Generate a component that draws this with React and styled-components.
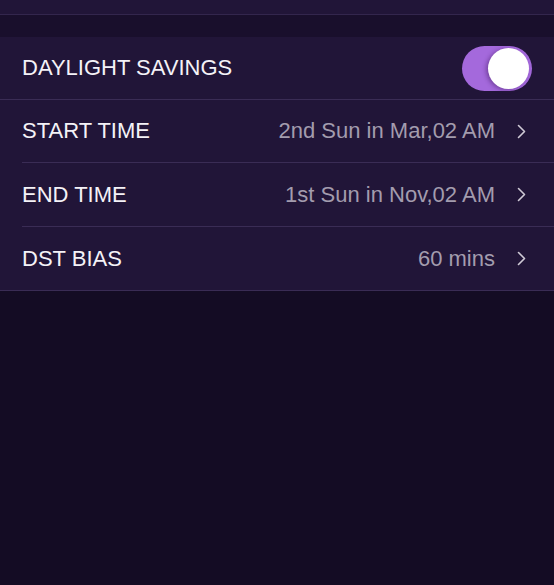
import React, { useState } from "react";
import styled, { createGlobalStyle } from "styled-components";

const Global = createGlobalStyle`
  html, body { margin: 0; padding: 0; background: #140c24; }
  body { font-family: "Liberation Sans", Arial, Helvetica, sans-serif; }
  * { box-sizing: border-box; }
`;

const Page = styled.div`
  width: 554px;
  height: 585px;
  background: #140c24;
  display: flex;
  flex-direction: column;
  overflow: hidden;
`;

const TopBar = styled.div`
  height: 15px;
  background: #211538;
  border-bottom: 1px solid #33264d;
`;

const Spacer = styled.div`
  height: 22px;
  background: #190f2c;
`;

const Group = styled.div`
  background: #211538;
  border-bottom: 1px solid #3a2c55;
`;

const Row = styled.div`
  height: ${(p) => (p.$tall ? 64 : 63)}px;
  display: flex;
  align-items: center;
  padding-left: 22px;
`;

const RowInner = styled.div`
  flex: 1;
  height: 100%;
  display: flex;
  align-items: center;
  padding-right: 28px;
  border-bottom: ${(p) => (p.$last ? "none" : "1px solid #3a2c55")};
`;

const FullRow = styled.div`
  height: 63px;
  display: flex;
  align-items: center;
  padding: 0 22px;
  border-bottom: 1px solid #3a2c55;
`;

const Label = styled.div`
  flex: 1;
  color: #f4f2f7;
  font-family: "Liberation Sans", Arial, sans-serif;
  font-size: 22px;
`;

const Value = styled.div`
  color: #a39cae;
  font-family: "Liberation Sans", Arial, sans-serif;
  font-size: 22px;
  margin-right: 22px;
`;

const Track = styled.button`
  width: 70px;
  height: 45px;
  border-radius: 23px;
  border: none;
  padding: 0;
  background: ${(p) => (p.$on ? "#a469dc" : "#4a3d60")};
  position: relative;
  cursor: pointer;
  margin-top: 1px;
`;

const Thumb = styled.span`
  position: absolute;
  top: 2px;
  left: ${(p) => (p.$on ? 26 : 2)}px;
  width: 41px;
  height: 41px;
  border-radius: 50%;
  background: #ffffff;
  box-shadow: -2px 1px 4px rgba(60, 20, 90, 0.45);
`;

const Chevron = () => (
  <svg width="9" height="15" viewBox="0 0 9 15" fill="none">
    <path d="M1.5 1.5 L7.5 7.5 L1.5 13.5" stroke="#cfcad6" strokeWidth="1.6" strokeLinecap="round" strokeLinejoin="round" />
  </svg>
);

const items = [
  { label: "START TIME", value: "2nd Sun in Mar,02 AM" },
  { label: "END TIME", value: "1st Sun in Nov,02 AM", tall: true },
  { label: "DST BIAS", value: "60 mins", last: true },
];

export default function App() {
  const [on, setOn] = useState(true);
  return (
    <Page>
      <Global />
      <TopBar />
      <Spacer />
      <Group>
        <FullRow>
          <Label>DAYLIGHT SAVINGS</Label>
          <Track $on={on} onClick={() => setOn(!on)} aria-label="toggle">
            <Thumb $on={on} />
          </Track>
        </FullRow>
        {items.map((it) => (
          <Row key={it.label} $tall={it.tall}>
            <RowInner $last={it.last}>
              <Label>{it.label}</Label>
              <Value>{it.value}</Value>
              <Chevron />
            </RowInner>
          </Row>
        ))}
      </Group>
    </Page>
  );
}
